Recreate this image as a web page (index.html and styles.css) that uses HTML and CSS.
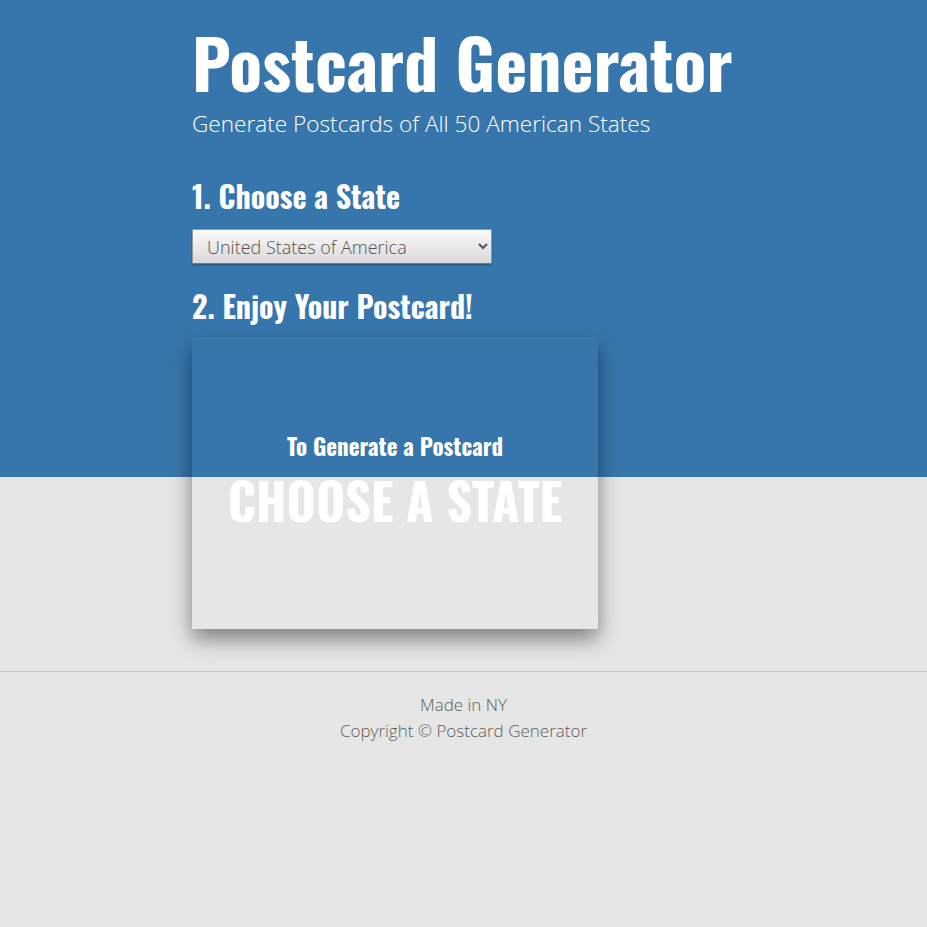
FILE: index.html
```html
<!DOCTYPE html>
<html>
<head>
<meta charset="utf-8">
<title>Postcard Generator</title>
<link rel="stylesheet" href="styles.css">
</head>
<body>
<main class="page">
  <header class="hero">
    <h1 class="title">Postcard Generator</h1>
    <p class="subtitle">Generate Postcards of All 50 American States</p>
  </header>
  <section class="step">
    <h2 class="step-title">1. Choose a State</h2>
    <select class="state-select">
      <option>United States of America</option>
    </select>
  </section>
  <section class="step">
    <h2 class="step-title step-title-2">2. Enjoy Your Postcard!</h2>
    <div class="postcard">
      <p class="postcard-hint">To Generate a Postcard</p>
      <p class="postcard-cta">CHOOSE A STATE</p>
    </div>
  </section>
</main>
<footer class="footer">
  <p class="footer-line">Made in NY</p>
  <p class="footer-line">Copyright © Postcard Generator</p>
</footer>
</body>
</html>
```
FILE: styles.css
```css
html, body {
  margin: 0;
  padding: 0;
}
body {
  background: linear-gradient(to bottom, #3776ac 0, #3776ac 477px, #e6e6e6 477px, #e6e6e6 100%);
  background-color: #e6e6e6;
  min-height: 927px;
  font-family: "Open Sans", "DejaVu Sans", sans-serif;
  color: #fff;
}
.page {
  width: 543px;
  margin: 0 auto;
  padding-top: 20px;
}
.title {
  font-family: Oswald, "Liberation Sans Narrow", "DejaVu Sans Condensed", sans-serif;
  font-weight: 700;
  font-size: 68px;
  line-height: 84px;
  margin: 0;
  white-space: nowrap;
}
.subtitle {
  font-weight: 300;
  font-size: 22.6px;
  line-height: 30px;
  margin: 5px 0 0;
  white-space: nowrap;
}
.step {
  display: flex;
  flex-direction: column;
  align-items: flex-start;
}
.step-title {
  font-family: Oswald, "Liberation Sans Narrow", "DejaVu Sans Condensed", sans-serif;
  font-weight: 700;
  font-size: 30px;
  line-height: 40px;
  margin: 37px 0 13px;
}
.step-title-2 {
  margin-top: 22px;
  margin-bottom: 11px;
}
.state-select {
  width: 300px;
  height: 35px;
  font-family: "Open Sans", sans-serif;
  font-weight: 300;
  font-size: 18px;
  color: #5a5050;
  padding: 0 8px 0 10px;
  border: 1px solid #999;
  border-bottom-color: #777;
  border-radius: 1px;
  background: linear-gradient(to bottom, #fafafa, #d9d9d9);
  box-shadow: 0 1px 2px rgba(0,0,0,0.3);
}
.postcard {
  box-sizing: border-box;
  width: 406px;
  height: 292px;
  padding-bottom: 7px;
  box-shadow: 0 10px 20px rgba(0,0,0,0.45);
  display: flex;
  flex-direction: column;
  align-items: center;
  justify-content: center;
  text-align: center;
}
.postcard-hint {
  font-family: Oswald, "Liberation Sans Narrow", sans-serif;
  font-weight: 700;
  font-size: 23px;
  line-height: 28px;
  margin: 0 0 11px;
}
.postcard-cta {
  font-family: Oswald, "Liberation Sans Narrow", sans-serif;
  font-weight: 700;
  font-size: 50px;
  line-height: 56px;
  margin: 0;
}
.footer {
  margin-top: 42px;
  border-top: 1px solid #c4c4c4;
  padding-top: 20px;
  text-align: center;
}
.footer-line {
  margin: 0;
  font-weight: 300;
  font-size: 17px;
  line-height: 26px;
  color: #5d5d5d;
}
```
